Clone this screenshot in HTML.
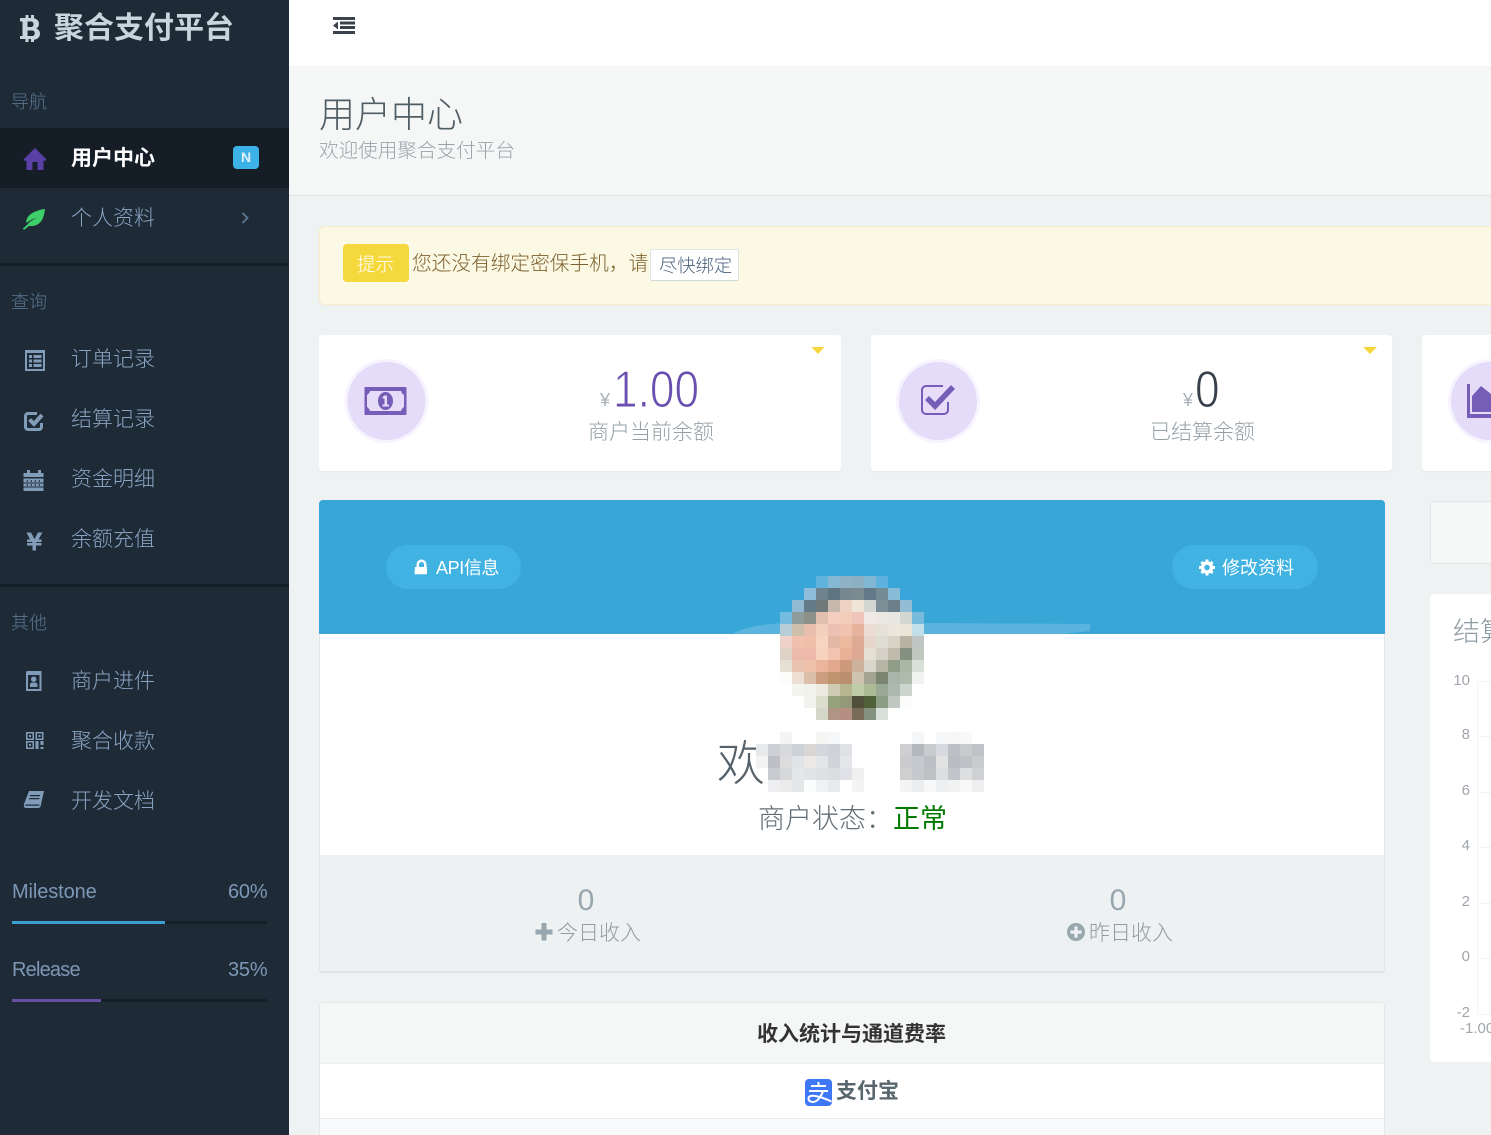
<!DOCTYPE html>
<html lang="zh"><head><meta charset="utf-8"><title>用户中心</title>
<style>
html,body{margin:0;padding:0;width:1491px;height:1135px;overflow:hidden;background:#eef2f3;font-family:"Liberation Sans","Noto Sans CJK SC",sans-serif;font-weight:300}
body{position:relative}
.a{position:absolute;white-space:nowrap}
.b{position:absolute;box-sizing:border-box}
#side{position:absolute;left:0;top:0;width:289px;height:1135px;background:#1f2a37}
.h{position:absolute;left:11px;font-size:18px;line-height:24px;color:#58758f;white-space:nowrap}
.m{position:absolute;left:71px;font-size:21px;line-height:30px;color:#88a4c2;white-space:nowrap}
svg.ic{position:absolute;left:0;top:0;overflow:visible}
svg.mo rect{width:12px;height:12px}
.c{position:absolute;white-space:nowrap;text-align:center}
.ax{position:absolute;font-size:15px;line-height:18px;color:#a0a6ac;text-align:right;white-space:nowrap}
.big{font-size:52px;line-height:60px;transform:scaleX(.85);transform-origin:0 0;-webkit-text-stroke:1.1px #fff}
</style></head><body>
<div class="b" style="left:289px;top:0;width:1202px;height:66px;background:#fff;box-shadow:0 1px 3px rgba(0,0,0,.12)"></div>
<div class="b" style="left:289px;top:66px;width:1202px;height:130px;background:#f5f7f7;border-bottom:1px solid #dfe4e6"></div>
<div class="a" style="left:319px;top:90px;font-size:36px;line-height:50px;color:#4f5d65">用户中心</div>
<div class="a" style="left:319px;top:136px;font-size:19.6px;line-height:30px;color:#98a3a9">欢迎使用聚合支付平台</div>

<div class="b" style="left:319px;top:226px;width:1190px;height:79px;background:#fbf8e3;border:1px solid #f9ecc8;border-radius:5px"></div>
<div class="b" style="left:343px;top:244px;width:66px;height:38px;background:#f5d93c;border-radius:4px"></div>
<div class="a" style="left:357px;top:252px;font-size:18.5px;line-height:26px;color:#fff">提示</div>
<div class="a" style="left:412px;top:249px;font-size:19.7px;line-height:30px;color:#7d5f2e">您还没有绑定密保手机，请</div>
<div class="b" style="left:650px;top:249px;width:89px;height:32px;background:#fff;border:1px solid #dee5e7;border-bottom-color:#cfd8dc;border-radius:2px"></div>
<div class="a" style="left:659px;top:253px;font-size:18.3px;line-height:26px;color:#4a627e">尽快绑定</div>

<div class="b" style="left:319px;top:335px;width:522px;height:136px;background:#fff;border-radius:4px;box-shadow:0 1px 1px rgba(0,0,0,.04)"></div>
<div class="b" style="left:871px;top:335px;width:521px;height:136px;background:#fff;border-radius:4px;box-shadow:0 1px 1px rgba(0,0,0,.04)"></div>
<div class="b" style="left:1422px;top:335px;width:90px;height:136px;background:#fff;border-radius:4px;box-shadow:0 1px 1px rgba(0,0,0,.04)"></div>
<div class="a" style="left:600px;top:389px;font-size:18px;line-height:22px;color:#a8b0b5">¥</div>
<div class="a big" style="left:613px;top:360px;color:#6a4fb0">1.00</div>
<div class="a" style="left:588px;top:418px;font-size:21px;line-height:30px;color:#949fa6">商户当前余额</div>
<div class="a" style="left:1183px;top:389px;font-size:18px;line-height:22px;color:#a8b0b5">¥</div>
<div class="a big" style="left:1195px;top:360px;color:#363f4a">0</div>
<div class="a" style="left:1150px;top:418px;font-size:21px;line-height:30px;color:#949fa6">已结算余额</div>

<div class="b" style="left:319px;top:500px;width:1066px;height:473px;background:#fff;border:1px solid #e3e7e9;border-top:0;border-bottom:2px solid #e0e4e6;border-radius:4px 4px 3px 3px;overflow:hidden"></div>
<div class="b" style="left:319px;top:500px;width:1066px;height:134px;background:#38a7d7;border-radius:4px 4px 0 0"></div>
<div class="b" style="left:320px;top:855px;width:1064px;height:116px;background:#eef1f2"></div>
<div class="b" style="left:386px;top:545px;width:135px;height:44px;background:#40b3e3;border-radius:22px"></div>
<div class="b" style="left:1172px;top:545px;width:146px;height:44px;background:#40b3e3;border-radius:22px"></div>
<div class="a" style="left:436px;top:554px;font-size:18px;line-height:28px;color:#fff;letter-spacing:-.4px;font-weight:400">API信息</div>
<div class="a" style="left:1222px;top:554px;font-size:18px;line-height:28px;color:#fff;font-weight:400">修改资料</div>

<div class="a" style="left:717px;top:731px;font-size:48px;line-height:68px;color:#55616a">欢迎</div>
<div class="a" style="left:758px;top:800px;font-size:27px;line-height:38px;color:#626e76">商户状态：<span style="color:#007a00;font-weight:400">正常</span></div>
<div class="c" style="left:486px;width:200px;top:880px;font-size:30px;line-height:42px;color:#98a6ad">0</div>
<div class="c" style="left:1018px;width:200px;top:880px;font-size:30px;line-height:42px;color:#98a6ad">0</div>
<div class="a" style="left:557px;top:919px;font-size:21px;line-height:30px;color:#929da3">今日收入</div>
<div class="a" style="left:1089px;top:919px;font-size:21px;line-height:30px;color:#929da3">昨日收入</div>

<div class="b" style="left:319px;top:1002px;width:1066px;height:140px;background:#fff;border:1px solid #e3e7e9;border-radius:4px"></div>
<div class="b" style="left:320px;top:1003px;width:1064px;height:61px;background:#f5f7f7;border-bottom:1px solid #edf0f1"></div>
<div class="b" style="left:320px;top:1118px;width:1064px;height:20px;background:#f8fafb;border-top:1px solid #e8edef"></div>
<div class="a" style="left:757px;top:1020px;font-size:21px;font-weight:bold;line-height:30px;color:#333">收入统计与通道费率</div>
<div class="a" style="left:836px;top:1077px;font-size:21px;font-weight:bold;line-height:30px;color:#58666e">支付宝</div>

<div class="b" style="left:1430px;top:501px;width:80px;height:63px;background:#f5f7f7;border:1px solid #e3e7e9;border-right:0;border-radius:3px"></div>
<div class="b" style="left:1430px;top:594px;width:80px;height:468px;background:#fff;border-radius:4px"></div>
<div class="a" style="left:1453px;top:613px;font-size:27px;line-height:38px;color:#8e9ca3;width:38px;overflow:hidden">结算</div>
<div class="b" style="left:1477px;top:681px;width:14px;height:333px;border-left:1px solid #f3f4f5"></div>
<div class="b" style="left:1477px;top:681px;width:14px;height:1px;background:#f3f4f5"></div>
<div class="b" style="left:1477px;top:736px;width:14px;height:1px;background:#f3f4f5"></div>
<div class="b" style="left:1477px;top:792px;width:14px;height:1px;background:#f3f4f5"></div>
<div class="b" style="left:1477px;top:847px;width:14px;height:1px;background:#f3f4f5"></div>
<div class="b" style="left:1477px;top:903px;width:14px;height:1px;background:#f3f4f5"></div>
<div class="b" style="left:1477px;top:958px;width:14px;height:1px;background:#f3f4f5"></div>
<div class="b" style="left:1477px;top:1014px;width:14px;height:1px;background:#f3f4f5"></div>
<div class="ax" style="left:1440px;width:30px;top:672px">10</div>
<div class="ax" style="left:1440px;width:30px;top:726px">8</div>
<div class="ax" style="left:1440px;width:30px;top:782px">6</div>
<div class="ax" style="left:1440px;width:30px;top:837px">4</div>
<div class="ax" style="left:1440px;width:30px;top:893px">2</div>
<div class="ax" style="left:1440px;width:30px;top:948px">0</div>
<div class="ax" style="left:1440px;width:30px;top:1004px">-2</div>
<div class="a" style="left:1460px;top:1020px;font-size:15px;line-height:18px;color:#a0a6ac">-1.00</div>

<svg class="ic" width="1491" height="1135" viewBox="0 0 1491 1135" style="z-index:1">
<!-- header menu icon -->
<path fill="#3a434c" d="M333 17h22v3h-22zM340 21.500h15v3h-15zM340 26h15v3h-15zM333 31h22v3h-22zM338 21.500v8l-5-4z"/>
<!-- triangles -->
<path fill="#f5d63d" d="M811.500 347h13l-6.500 7zM1363 347h14l-7 7z"/>
<!-- stat icons -->
<circle cx="386.500" cy="401" r="42" fill="#f6f4fe"/><circle cx="386.500" cy="401" r="39" fill="#e4dcf8"/>
<circle cx="938" cy="401" r="42" fill="#f6f4fe"/><circle cx="938" cy="401" r="39" fill="#e4dcf8"/>
<circle cx="1490" cy="401" r="42" fill="#f6f4fe"/><circle cx="1490" cy="401" r="39" fill="#e4dcf8"/>
<rect x="364.500" y="387" width="42" height="28" rx="1" fill="#755db8"/>
<path fill="#e4dcf8" d="M370 391h31c.5 2 2 3.500 3 4v12c-1 .5-2.500 2-3 4h-31c-.5-2-2-3.500-3-4v-12c1-.5 2.500-2 3-4z"/>
<ellipse cx="385.500" cy="401" rx="7.500" ry="9" fill="#755db8"/>
<path fill="#e4dcf8" d="M384.500 395.500h2.500v9h2v2h-6.500v-2h2v-6h-2v-1.500z"/>
<path fill="none" stroke="#755db8" stroke-width="2" d="M948 402v8a4 4 0 0 1-4 4h-18a4 4 0 0 1-4-4v-20a4 4 0 0 1 4-4h17"/>
<path fill="none" stroke="#755db8" stroke-width="5.500" stroke-linejoin="miter" d="M927 398l8 8 18-19"/>
<path fill="#755db8" d="M1467 384h3v30h21v4h-24zM1472 412v-16l9-10 10 8v18z"/>
<!-- pill icons -->
<path fill="#fff" fill-rule="evenodd" d="M415 567h1.500v-2.500a5 5 0 0 1 10 0v2.500h.5v6.500a.8.8 0 0 1-.8.8h-10.900a.8.8 0 0 1-.8-.8zM419 567h5v-2.500a2.500 2.500 0 0 0-5 0z"/>
<g transform="translate(1207 567.500)"><circle r="4.500" fill="none" stroke="#fff" stroke-width="3.500"/><path stroke="#fff" stroke-width="3" d="M0-8V-5M0 5V8M-8 0H-5M5 0H8M-5.600-5.600L-3.500-3.500M5.600 5.600L3.500 3.500M-5.600 5.600L-3.500 3.500M5.600-5.600L3.500-3.500"/></g>
<!-- plus icons -->
<path fill="#98a6ad" d="M541.500 923h5v6.500h6v5h-6v6h-5v-6h-6v-5h6z"/>
<circle cx="1076" cy="932" r="9" fill="#98a6ad"/><path fill="#eef1f2" d="M1074.400 926.500h3.200v4h4v3.200h-4v4h-3.200v-4h-4v-3.200h4z"/>
<!-- alipay -->
<rect x="805" y="1079" width="27" height="27" rx="4" fill="#3f78f6"/>
<path fill="none" stroke="#fff" stroke-width="2" d="M811 1086h15M818.500 1082v4M809 1091h19M823 1091c-2 6-6 11-10 11-3 0-4.500-1.500-4.500-3.500 0-4 8-4 23 3"/>
<!-- smear -->
<path fill="#5ab4dd" d="M733 634c8-6 30-11 60-11h130l167 1v7l-28 3z"/>
</svg>

<svg class="ic mo" width="1491" height="1135" viewBox="0 0 1491 1135" style="z-index:2">
<g>
<rect x="816" y="576" fill="#5fb4de"/><rect x="828" y="576" fill="#85b8d3"/><rect x="840" y="576" fill="#8fb1c6"/><rect x="852" y="576" fill="#8dafc4"/><rect x="864" y="576" fill="#82b7d3"/><rect x="876" y="576" fill="#5db3de"/>
<rect x="792" y="588" fill="#3aa5d9"/><rect x="804" y="588" fill="#8dbdd8"/><rect x="816" y="588" fill="#6f838f"/><rect x="828" y="588" fill="#5e7480"/><rect x="840" y="588" fill="#76878f"/><rect x="852" y="588" fill="#7a8a90"/><rect x="864" y="588" fill="#62798a"/><rect x="876" y="588" fill="#748a95"/><rect x="888" y="588" fill="#88bcd6"/><rect x="900" y="588" fill="#3aa5da"/>
<rect x="792" y="600" fill="#92bbd3"/><rect x="804" y="600" fill="#637a87"/><rect x="816" y="600" fill="#70797a"/><rect x="828" y="600" fill="#c6b8ac"/><rect x="840" y="600" fill="#eed3c5"/><rect x="852" y="600" fill="#f1e5d9"/><rect x="864" y="600" fill="#d1d6d2"/><rect x="876" y="600" fill="#7b8e95"/><rect x="888" y="600" fill="#6c7f8a"/><rect x="900" y="600" fill="#94bcd6"/>
<rect x="780" y="612" fill="#74bde0"/><rect x="792" y="612" fill="#8e9d9b"/><rect x="804" y="612" fill="#8e9188"/><rect x="816" y="612" fill="#e0bfae"/><rect x="828" y="612" fill="#f6cebf"/><rect x="840" y="612" fill="#f3cdb9"/><rect x="852" y="612" fill="#eec5b8"/><rect x="864" y="612" fill="#f1e9e5"/><rect x="876" y="612" fill="#ebe8e2"/><rect x="888" y="612" fill="#e9e7e1"/><rect x="900" y="612" fill="#d4d6d1"/><rect x="912" y="612" fill="#78bbdd"/>
<rect x="780" y="624" fill="#b8ced6"/><rect x="792" y="624" fill="#cebfac"/><rect x="804" y="624" fill="#e8bfae"/><rect x="816" y="624" fill="#f3cfbd"/><rect x="828" y="624" fill="#ecc1b4"/><rect x="840" y="624" fill="#f0c2b0"/><rect x="852" y="624" fill="#e7b39d"/><rect x="864" y="624" fill="#ecdcd3"/><rect x="876" y="624" fill="#e5e1d7"/><rect x="888" y="624" fill="#ebe7dd"/><rect x="900" y="624" fill="#ebe5d9"/><rect x="912" y="624" fill="#c0dfe9"/>
<rect x="780" y="636" fill="#eed2ca"/><rect x="792" y="636" fill="#f2c1ae"/><rect x="804" y="636" fill="#f1bea9"/><rect x="816" y="636" fill="#f6d4c0"/><rect x="828" y="636" fill="#e1b8a3"/><rect x="840" y="636" fill="#edb99f"/><rect x="852" y="636" fill="#dfaa94"/><rect x="864" y="636" fill="#e6d6cb"/><rect x="876" y="636" fill="#dfdcd1"/><rect x="888" y="636" fill="#d8d3c6"/><rect x="900" y="636" fill="#b8b4a3"/><rect x="912" y="636" fill="#bfc5c2"/>
<rect x="780" y="648" fill="#ddd2c5"/><rect x="792" y="648" fill="#ecb9aa"/><rect x="804" y="648" fill="#eeb9aa"/><rect x="816" y="648" fill="#f7d3bf"/><rect x="828" y="648" fill="#f2c4b0"/><rect x="840" y="648" fill="#e9b298"/><rect x="852" y="648" fill="#dea994"/><rect x="864" y="648" fill="#e6dfd4"/><rect x="876" y="648" fill="#d6d1c6"/><rect x="888" y="648" fill="#bfbaac"/><rect x="900" y="648" fill="#849180"/><rect x="912" y="648" fill="#c0c9c0"/>
<rect x="780" y="660" fill="#e6dfd4"/><rect x="792" y="660" fill="#e9c3b0"/><rect x="804" y="660" fill="#efc1aa"/><rect x="816" y="660" fill="#ebb49c"/><rect x="828" y="660" fill="#e2a98f"/><rect x="840" y="660" fill="#cd9a7c"/><rect x="852" y="660" fill="#cdb29e"/><rect x="864" y="660" fill="#d9d6cb"/><rect x="876" y="660" fill="#b5b6a5"/><rect x="888" y="660" fill="#8f9c88"/><rect x="900" y="660" fill="#a8b8a5"/><rect x="912" y="660" fill="#d9dfd9"/>
<rect x="780" y="672" fill="#fcfcfa"/><rect x="792" y="672" fill="#ecdfd1"/><rect x="804" y="672" fill="#dcbfa8"/><rect x="816" y="672" fill="#cc9d7f"/><rect x="828" y="672" fill="#bf9570"/><rect x="840" y="672" fill="#ba8f70"/><rect x="852" y="672" fill="#cfc4af"/><rect x="864" y="672" fill="#a3a491"/><rect x="876" y="672" fill="#7b8572"/><rect x="888" y="672" fill="#a8b5a8"/><rect x="900" y="672" fill="#afbcad"/><rect x="912" y="672" fill="#f0f3f0"/>
<rect x="792" y="684" fill="#f5f5f0"/><rect x="804" y="684" fill="#f2f2ec"/><rect x="816" y="684" fill="#ece9de"/><rect x="828" y="684" fill="#cdcbb2"/><rect x="840" y="684" fill="#b7b78f"/><rect x="852" y="684" fill="#bfcca8"/><rect x="864" y="684" fill="#abbc95"/><rect x="876" y="684" fill="#9aa995"/><rect x="888" y="684" fill="#adb8af"/><rect x="900" y="684" fill="#cdd5cf"/>
<rect x="804" y="696" fill="#f2f3ee"/><rect x="816" y="696" fill="#dcdecd"/><rect x="828" y="696" fill="#95a27c"/><rect x="840" y="696" fill="#939978"/><rect x="852" y="696" fill="#50503a"/><rect x="864" y="696" fill="#4f6137"/><rect x="876" y="696" fill="#8c9d85"/><rect x="888" y="696" fill="#bfc9c2"/><rect x="900" y="696" fill="#fafbfa"/>
<rect x="816" y="708" fill="#d4d7c8"/><rect x="828" y="708" fill="#b09585"/><rect x="840" y="708" fill="#b68f82"/><rect x="852" y="708" fill="#786c58"/><rect x="864" y="708" fill="#83917f"/><rect x="876" y="708" fill="#d9dfda"/>
</g>
<path fill="#fff" d="M770 732h215v56l-20 3H790c-20 0-33-15-33-30s5-29 13-29z"/>
<g>
<rect x="780" y="732" fill="#f4f4f4"/><rect x="816" y="732" fill="#f5f5f3"/><rect x="828" y="732" fill="#f6f7f8"/><rect x="912" y="732" fill="#f4f6f8"/><rect x="936" y="732" fill="#f6f7f8"/><rect x="948" y="732" fill="#f6f6f6"/><rect x="960" y="732" fill="#f9f9f9"/>
<rect x="756" y="744" fill="#e8e9ea"/><rect x="768" y="744" fill="#cfd0d5"/><rect x="780" y="744" fill="#d8d9dc"/><rect x="792" y="744" fill="#cdd2d9"/><rect x="804" y="744" fill="#d9d6d6"/><rect x="816" y="744" fill="#d3d7dc"/><rect x="828" y="744" fill="#cfd2d8"/><rect x="840" y="744" fill="#dfe1e5"/>
<rect x="756" y="756" fill="#f2f3f2"/><rect x="768" y="756" fill="#bfc0c5"/><rect x="780" y="756" fill="#dcdcdd"/><rect x="792" y="756" fill="#dfe4e7"/><rect x="804" y="756" fill="#ece8e8"/><rect x="816" y="756" fill="#e2e6e9"/><rect x="828" y="756" fill="#d0d4d8"/><rect x="840" y="756" fill="#e5e6ea"/>
<rect x="768" y="768" fill="#c8cbd0"/><rect x="780" y="768" fill="#d6d8da"/><rect x="792" y="768" fill="#e3e8ea"/><rect x="804" y="768" fill="#e2e3e7"/><rect x="816" y="768" fill="#dfe0e2"/><rect x="828" y="768" fill="#dcdde0"/><rect x="840" y="768" fill="#dfe1e7"/><rect x="852" y="768" fill="#f0f0f1"/>
<rect x="768" y="780" fill="#eeeef0"/><rect x="780" y="780" fill="#ebebec"/><rect x="792" y="780" fill="#e5e6e8"/><rect x="804" y="780" fill="#fbfcfc"/><rect x="816" y="780" fill="#f0f1f2"/><rect x="828" y="780" fill="#e9eaec"/><rect x="852" y="780" fill="#f4f4f5"/>
<rect x="900" y="744" fill="#cfcfd1"/><rect x="912" y="744" fill="#b3b8bc"/><rect x="924" y="744" fill="#c8cacd"/><rect x="936" y="744" fill="#d7d9de"/><rect x="948" y="744" fill="#bec0c5"/><rect x="960" y="744" fill="#c8cace"/><rect x="972" y="744" fill="#c0c3c7"/>
<rect x="900" y="756" fill="#cbcbcd"/><rect x="912" y="756" fill="#c4c9cd"/><rect x="924" y="756" fill="#bcbfc3"/><rect x="936" y="756" fill="#e2e2e3"/><rect x="948" y="756" fill="#b9bcc1"/><rect x="960" y="756" fill="#c0c1c6"/><rect x="972" y="756" fill="#c8cbce"/>
<rect x="900" y="768" fill="#cfcfd0"/><rect x="912" y="768" fill="#c5c9cd"/><rect x="924" y="768" fill="#bfc2c5"/><rect x="936" y="768" fill="#dcdee2"/><rect x="948" y="768" fill="#c2c5ca"/><rect x="960" y="768" fill="#dddfe0"/><rect x="972" y="768" fill="#d0d1d5"/>
<rect x="900" y="780" fill="#f4f4f5"/><rect x="912" y="780" fill="#ebedee"/><rect x="924" y="780" fill="#f8f8f8"/><rect x="936" y="780" fill="#eeeff0"/><rect x="948" y="780" fill="#f2f2f3"/><rect x="960" y="780" fill="#f8f8f9"/><rect x="972" y="780" fill="#eeeeef"/>
</g>
</svg>

<div id="side">
<div class="a" style="left:54px;top:7px;font-size:30px;font-weight:bold;line-height:44px;color:#c9d5de">聚合支付平台</div>
<div class="h" style="top:90px">导航</div>
<div class="b" style="left:0;top:128px;width:289px;height:60px;background:#151e27"></div>
<div class="m" style="top:144px;color:#fff;font-weight:bold">用户中心</div>
<div class="b" style="left:233px;top:146px;width:26px;height:23px;background:#3db2e6;border-radius:4px"></div>
<div class="c" style="left:233px;width:26px;top:146px;font-size:14px;font-weight:bold;line-height:23px;color:#dff2fb">N</div>
<div class="m" style="top:204px">个人资料</div>
<div class="b" style="left:0;top:263px;width:289px;height:3px;background:#161e27"></div>
<div class="h" style="top:290px">查询</div>
<div class="m" style="top:345px">订单记录</div>
<div class="m" style="top:405px">结算记录</div>
<div class="m" style="top:465px">资金明细</div>
<div class="m" style="top:525px">余额充值</div>
<div class="b" style="left:0;top:584px;width:289px;height:3px;background:#161e27"></div>
<div class="h" style="top:611px">其他</div>
<div class="m" style="top:667px">商户进件</div>
<div class="m" style="top:727px">聚合收款</div>
<div class="m" style="top:787px">开发文档</div>
<div class="a" style="left:12px;top:879px;font-size:20px;line-height:26px;color:#7c98b6;letter-spacing:-.1px">Milestone</div>
<div class="a" style="left:228px;top:879px;font-size:20px;line-height:26px;color:#7c98b6;letter-spacing:-.2px">60%</div>
<div class="b" style="left:12px;top:921px;width:255px;height:3px;background:#161e27"></div>
<div class="b" style="left:12px;top:921px;width:153px;height:3px;background:#3a9fd5"></div>
<div class="a" style="left:12px;top:957px;font-size:20px;line-height:26px;color:#7c98b6;letter-spacing:-.8px">Release</div>
<div class="a" style="left:228px;top:957px;font-size:20px;line-height:26px;color:#7c98b6;letter-spacing:-.2px">35%</div>
<div class="b" style="left:12px;top:999px;width:255px;height:3px;background:#161e27"></div>
<div class="b" style="left:12px;top:999px;width:89px;height:3px;background:#66509f"></div>
<svg class="ic" width="289" height="1135" viewBox="0 0 289 1135">
<!-- bitcoin -->
<path fill="#c9d5de" fill-rule="evenodd" d="M25.500 15h3v3h2.500v-3h3v3.300c3 .7 5 2.700 5 5.700 0 2-1 3.700-2.800 4.500 2.400.8 3.800 2.700 3.800 5.200 0 3.300-2.400 5.500-6 6V42h-3v-3h-2.500v3h-3v-3H20v-3h2.500V21.500H20V18h5.500zM27.500 21.500v5.500h3.500c1.500 0 2.500-1 2.500-2.750s-1-2.750-2.500-2.750zM27.500 30.500V36h4.500c1.700 0 2.700-1 2.700-2.750s-1-2.750-2.700-2.750z"/>
<!-- home -->
<path fill="#5a3fa5" d="M35 148l11.500 11.500-1.500 1.500-1.500-.5V170h-6v-8h-5v8h-6v-9.500l-1.500.5-1.500-1.500z"/>
<!-- leaf -->
<path fill="#3ecf6a" d="M45 209C44 218 41 227 29 226L24 230 23 228.500 27.500 224.500C30 221 34 219 37 218 33 218.500 29.500 220.500 26.500 223 25 215 36 210 45 209z"/>
<path fill="none" stroke="#5d7a94" stroke-width="1.800" d="M242.500 213l5 5-5 5"/>
<g fill="#809cb9">
<!-- list -->
<path fill-rule="evenodd" d="M25 350h20v21H25zM27 353v16h16v-16z"/>
<path d="M29 355h3v3h-3zM33.500 355h8v3h-8zM29 359.500h3v3h-3zM33.500 359.500h8v3h-8zM29 364h3v3h-3zM33.500 364h8v3h-8z"/>
<!-- calendar -->
<path d="M27 470h3v3h8v-3h3v3h2.500v4h-20v-4H27z"/>
<path fill-rule="evenodd" d="M23.500 478.500h20V491h-20zM26.800 480v2h1v-2zM30.800 480v2h1v-2zM34.800 480v2h1v-2zM38.800 480v2h1v-2zM26.800 484v2h1v-2zM30.800 484v2h1v-2zM34.800 484v2h1v-2zM38.800 484v2h1v-2zM23.500 482.500h20v1h-20zM23.500 486.500h20v1h-20z"/>
<!-- yen -->
<path d="M26.500 532.500h4.500l3.500 6.500 3.500-6.500h4.500l-4 7h3v2.500h-5l-.5 1h5.500v2.500H36v5h-3.500v-5H27V543h5.500l-.5-1h-5v-2.500h3z"/>
<!-- id -->
<path fill-rule="evenodd" d="M27.500 671h14v20h-15.500V672.500a1.500 1.500 0 0 1 1.500-1.500zM28 675v14h11.500v-14z"/>
<path d="M30 687v-2.500c0-1.500 1.500-2 3.700-2s3.700.5 3.700 2v2.500zM33.700 676.500a2.700 2.700 0 1 1 0 5.400 2.700 2.700 0 0 1 0-5.400z"/>
<!-- qr -->
<path fill-rule="evenodd" d="M26 732h8v8h-8zM27.500 733.500v5h5v-5zM35.500 732h8v8h-8zM37 733.500v5h5v-5zM26 741h8v8h-8zM27.500 742.500v5h5v-5z"/>
<path d="M29 735h2v2h-2zM38.500 735h2v2h-2zM29 744h2v2h-2zM35.500 741h3v3h2v-3h3v4h-3v-1h-2v5h-3zM40.500 747h3v2h-3z"/>
<!-- book -->
<path d="M29 791h15l-.8 3.500-2.500 11.500c-.2.800-1 2-2.500 2H26c-2 0-2.500-2-2-4z"/>
<path fill="#1f2a37" d="M30 795h10v1.200H29.700zM29.400 798h10v1.200H29.100zM25.500 804.500h14l-.3 1.200h-14z"/>
</g>
<path fill="none" stroke="#809cb9" stroke-width="3" d="M41.500 423v4a2.500 2.500 0 0 1-2.500 2.500H28a2.500 2.500 0 0 1-2.500-2.500V416a2.500 2.500 0 0 1 2.500-2.500h9"/>
<path fill="none" stroke="#809cb9" stroke-width="4" d="M29.500 419.500l4.500 4.500 8-9"/>
</svg>
</div>
</body></html>
